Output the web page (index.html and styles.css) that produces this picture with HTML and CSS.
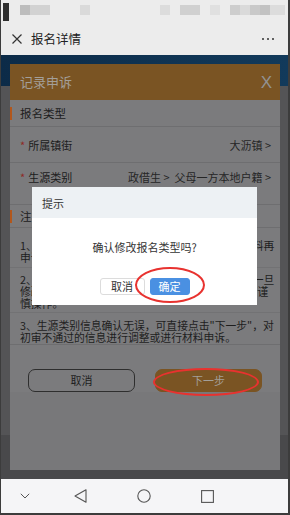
FILE: index.html
```html
<!DOCTYPE html>
<html lang="zh-CN">
<head>
<meta charset="utf-8">
<title>报名详情</title>
<link rel="stylesheet" href="styles.css">
</head>
<body>
<div class="screen">
  <div class="statusbar">
    <span class="sb-dark"></span>
    <span class="blk b1"></span><span class="blk b2"></span>
    <span class="blk b3"></span>
    <span class="blk b4"></span><span class="blk b5"></span>
    <span class="blk b6"></span>
    <span class="blk b7"></span><span class="blk b8"></span><span class="blk b9"></span><span class="blk b10"></span><span class="blk b11"></span>
  </div>
  <div class="titlebar">
    <svg class="close-ic" width="10" height="10" viewBox="0 0 10 10"><path d="M0.5 0.5 L9.5 9.5 M9.5 0.5 L0.5 9.5" stroke="#333" stroke-width="1.2" fill="none"/></svg>
    <span class="title">报名详情</span>
    <span class="more"><i></i><i></i><i></i></span>
  </div>
  <div class="main">
    <div class="page-head">
      <svg class="back-ic" width="6" height="10" viewBox="0 0 6 10"><path d="M5 0.5 L1 5 L5 9.5" stroke="#5d7690" stroke-width="1.2" fill="none"/></svg>
    </div>
    <div class="page-content"></div>
    <div class="popup">
      <div class="pop-head"><span class="pop-title">记录申诉</span><span class="pop-x">X</span></div>
      <div class="sec"><i class="bar"></i>报名类型</div>
      <div class="row"><span class="lbl"><em>*</em>所属镇街</span><span class="val">大沥镇 &gt;</span></div>
      <div class="row tall"><span class="lbl"><em>*</em>生源类别</span><span class="val">政借生 &gt;&nbsp;&nbsp;父母一方本地户籍 &gt;</span></div>
      <div class="sec notes-title"><i class="bar"></i>注意事项</div>
      <div class="note n1">1、请核对报名类型是否正确，有误请修改后补材料再<br>申诉。</div>
      <div class="note n2">2、生源类别及报名类型将作为审核的重要依据，一旦<br>修改将重新进入初审审核流程，影响审核进度，请谨<br>慎操作。</div>
      <div class="note n3">3、生源类别信息确认无误，可直接点击"下一步"，对<br>初审不通过的信息进行调整或进行材料申诉。</div>
      <div class="pop-foot"><button class="btn-cancel">取消</button><button class="btn-next">下一步</button></div>
      <div class="pop-rest"></div>
    </div>
  </div>
  <div class="navbar">
    <svg class="nav-ic n-down" width="10" height="6" viewBox="0 0 10 6"><path d="M0.8 0.8 L5 5 L9.2 0.8" stroke="#555" stroke-width="1" fill="none"/></svg>
    <svg class="nav-ic n-back" width="13" height="14" viewBox="0 0 13 14"><path d="M12 0.8 L12 13.2 L1 7 Z" stroke="#555" stroke-width="1.1" fill="none" stroke-linejoin="round"/></svg>
    <svg class="nav-ic n-home" width="14" height="14" viewBox="0 0 14 14"><circle cx="7" cy="7" r="6.2" stroke="#555" stroke-width="1.1" fill="none"/></svg>
    <svg class="nav-ic n-rec" width="13" height="13" viewBox="0 0 13 13"><rect x="0.6" y="0.6" width="11.8" height="11.8" stroke="#555" stroke-width="1.1" fill="none"/></svg>
  </div>
  <div class="dialog">
    <div class="dlg-head">提示</div>
    <div class="dlg-msg">确认修改报名类型吗?</div>
    <div class="dlg-btns"><button class="dbtn dbtn-cancel">取消</button><button class="dbtn dbtn-ok">确定</button></div>
  </div>
  <span class="ring ring1"></span>
  <span class="ring ring2"></span>
</div>
</body>
</html>
```

FILE: styles.css
```css
* { box-sizing: border-box; }
html, body { margin: 0; padding: 0; }
body {
  width: 290px;
  height: 515px;
  overflow: hidden;
  font-family: "Noto Sans CJK SC", "Noto Sans", sans-serif;
  background: #ececec;
}
.screen {
  position: relative;
  width: 290px;
  height: 515px;
  display: flex;
  flex-direction: column;
  border-left: 1px solid #3c3c3c;
  border-right: 2px solid #3c3c3c;
  overflow: hidden;
}
.statusbar {
  height: 22px;
  flex: none;
  background: #ececec;
  display: flex;
  align-items: flex-start;
  padding-top: 5px;
}
.sb-dark {
  width: 6px;
  height: 18px;
  margin: -2px 0 0 2px;
  background: #2e2e2e;
}
.blk { height: 10px; display: block; }
.b1 { width: 10px; margin-left: 11px; background: #bdbdbd; }
.b2 { width: 20px; background: #d2d2d2; }
.b3 { width: 10px; margin-left: 30px; background: #dadada; }
.b4 { width: 10px; margin-left: 70px; background: #dcdcdc; }
.b5 { width: 20px; margin-left: 10px; background: #d0d0d0; }
.b6 { width: 10px; margin-left: 10px; background: #e0e0e0; }
.b7 { width: 10px; margin-left: 10px; background: #cdcdcd; }
.b8 { width: 10px; background: #dadada; }
.b9 { width: 10px; background: #c9c9c9; }
.b10 { width: 10px; background: #c2c2c2; }
.b11 { width: 15px; background: #dcdcdc; }

.titlebar {
  height: 33px;
  flex: none;
  background: #ececec;
  display: flex;
  align-items: center;
  padding: 0 12px 0 10px;
}
.close-ic { margin-left: 1px; }
.title {
  margin-left: 9px;
  font-size: 12.5px;
  color: #222;
  line-height: 16px;
}
.more {
  margin-left: auto;
  display: flex;
  gap: 3px;
  padding-right: 2px;
}
.more i {
  display: block;
  width: 2px;
  height: 2px;
  background: #333;
  border-radius: 50%;
}

.main {
  position: relative;
  flex: 1;
  background: #49494b;
  display: flex;
  flex-direction: column;
}
.page-head {
  height: 31px;
  background: linear-gradient(90deg, #0c2b48, #123a5b);
  padding: 3px 0 0 12px;
}
.page-content {
  height: 349px;
  background: #545456;
}

.popup {
  position: absolute;
  left: 9px;
  top: 9px;
  width: 270px;
  height: 406px;
  background: #7b7b7d;
  display: flex;
  flex-direction: column;
}
.pop-head {
  height: 36px;
  flex: none;
  background: #7a5423;
  display: flex;
  align-items: center;
  justify-content: space-between;
  padding: 0 8px 0 10px;
}
.pop-title {
  font-size: 13px;
  color: #a39f99;
  line-height: 16px;
}
.pop-x {
  font-family: "Liberation Sans", Arial, sans-serif;
  font-size: 17px;
  color: #929292;
  line-height: 17px;
}
.sec {
  height: 27px;
  flex: none;
  display: flex;
  align-items: center;
  font-size: 11.5px;
  color: #1c1c1c;
  border-bottom: 1px solid #6e6e70;
}
.bar {
  display: block;
  width: 2px;
  height: 13px;
  background: #b2571c;
  margin-right: 8px;
}
.notes-title { height: 23px; }
.row {
  height: 36px;
  flex: none;
  display: flex;
  align-items: center;
  justify-content: space-between;
  padding: 0 9px 0 10px;
  border-bottom: 1px solid #6e6e70;
  font-size: 11px;
}
.row.tall {
  height: 42px;
  align-items: flex-start;
  padding-top: 7px;
}
.lbl { color: #1c1c1c; line-height: 14px; }
.lbl em {
  font-style: normal;
  color: #8e2a26;
  margin-right: 3px;
}
.val { color: #262626; line-height: 14px; }

.note {
  flex: none;
  font-size: 10.8px;
  line-height: 12px;
  color: #1e1e1e;
  white-space: nowrap;
  padding: 0 0 0 10px;
  border-bottom: 1px solid #727274;
}
.n1 { height: 40px; padding-top: 11px; }
.n2 { height: 45px; padding-top: 5px; }
.n3 { height: 32px; padding-top: 6px; border-bottom: 1px solid #6e6e70; }

.pop-foot {
  flex: none;
  display: flex;
  gap: 20px;
  padding: 24px 18px 0 18px;
}
.pop-foot button {
  width: 107px;
  height: 23px;
  font-family: inherit;
  font-size: 11px;
  border-radius: 7px;
  padding: 0;
  line-height: 21px;
}
.btn-cancel {
  background: transparent;
  border: 1px solid #2e2e2e;
  color: #1e1e1e;
}
.btn-next {
  background: #7a5423;
  border: 1px solid #7a5423;
  color: #a39f99;
}
.pop-rest {
  flex: 1;
  background: #78787a;
}

.navbar {
  height: 36px;
  flex: none;
  background: #f5f5f7;
  border-bottom: 2px solid #3c3c3c;
  display: flex;
  align-items: center;
}
.nav-ic { display: block; }
.n-down { margin-left: 19px; }
.n-back { margin-left: 44px; }
.n-home { margin-left: 50px; }
.n-rec { margin-left: 50px; }

.dialog {
  position: absolute;
  left: 31px;
  top: 187px;
  width: 225px;
  height: 118px;
  background: #fff;
  display: flex;
  flex-direction: column;
}
.dlg-head {
  height: 31px;
  background: #edf1f4;
  font-size: 11px;
  color: #333;
  display: flex;
  align-items: center;
  padding-left: 10px;
}
.dlg-msg {
  margin-top: 22px;
  height: 14px;
  line-height: 14px;
  text-align: center;
  font-size: 11px;
  color: #333;
}
.dlg-btns {
  margin-top: 24px;
  display: flex;
  justify-content: center;
  gap: 5px;
}
.dbtn {
  height: 17px;
  padding: 0;
  font-family: inherit;
  font-size: 11px;
  line-height: 15px;
  border-radius: 3px;
}
.dbtn-cancel {
  width: 45px;
  background: #fff;
  border: 1px solid #dcdcdc;
  color: #333;
}
.dbtn-ok {
  width: 40px;
  background: #4a90e2;
  border: 1px solid #4a90e2;
  color: #fff;
}

.ring {
  position: absolute;
  border: 2.5px solid #e8322f;
  border-radius: 50%;
  pointer-events: none;
}
.ring1 { left: 134px; top: 267px; width: 70px; height: 36px; }
.ring2 { left: 152px; top: 368px; width: 106px; height: 28px; }
```
